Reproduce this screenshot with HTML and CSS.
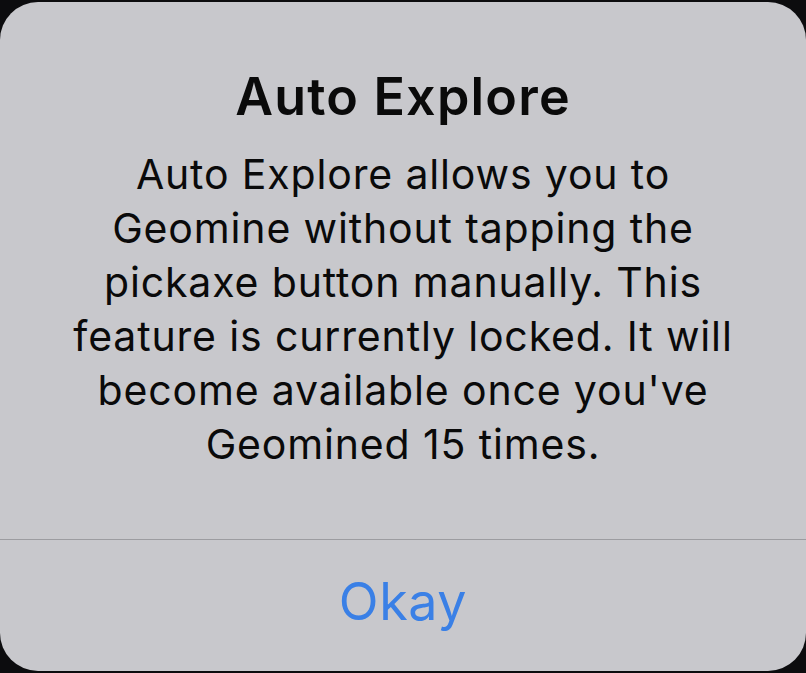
FILE: index.html
```html
<!DOCTYPE html>
<html lang="en">
<head>
<meta charset="utf-8">
<title>Auto Explore</title>
<link rel="stylesheet" href="styles.css">
</head>
<body>
<div class="alert">
  <div class="alert-content">
    <h1 class="alert-title">Auto Explore</h1>
    <p class="alert-message">Auto Explore allows you to<br>Geomine without tapping the<br>pickaxe button manually. This<br>feature is currently locked. It will<br>become available once you've<br>Geomined 15 times.</p>
  </div>
  <div class="alert-actions">
    <button class="alert-button">Okay</button>
  </div>
</div>
</body>
</html>
```
FILE: styles.css
```css
html, body {
  margin: 0;
  padding: 0;
  background: #0c0c0e;
  height: 673px;
  overflow: hidden;
}
body {
  padding-top: 2px;
  box-sizing: border-box;
  font-family: Inter, "Noto Sans", sans-serif;
  color: #0a0a0a;
}
.alert {
  height: 669px;
  background: #c8c8cc;
  border-radius: 38px;
  display: flex;
  flex-direction: column;
}
.alert-content {
  height: 537px;
  box-sizing: border-box;
  padding-top: 65px;
  text-align: center;
}
.alert-title {
  margin: 0;
  font-size: 52px;
  font-weight: 600;
  line-height: 60px;
  letter-spacing: 1.2px;
}
.alert-message {
  margin: 20px 0 0;
  font-size: 41px;
  font-weight: 400;
  line-height: 54px;
  letter-spacing: 0.85px;
}
.alert-actions {
  flex: 1;
  border-top: 1px solid #9c9ca0;
  display: flex;
  align-items: center;
  justify-content: center;
}
.alert-button {
  background: none;
  border: 0;
  padding: 0;
  margin-top: -8px;
  font-family: Inter, "Noto Sans", sans-serif;
  font-size: 52px;
  letter-spacing: 0.6px;
  color: #3a80e6;
  cursor: pointer;
}
```
